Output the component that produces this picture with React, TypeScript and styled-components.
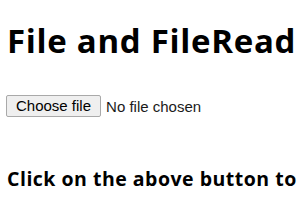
import React from 'react';
import styled, { createGlobalStyle } from 'styled-components';

const GlobalStyle = createGlobalStyle`
  html, body {
    margin: 0;
    background: #ffffff;
    overflow: hidden;
  }
  body {
    padding: 8px 7px;
    font-family: "Open Sans", "Noto Sans", sans-serif;
    color: #000000;
  }
`;

const Page = styled.div`
  display: flex;
  flex-direction: column;
`;

const Title = styled.h1`
  margin: 12px 0 0 0;
  font-size: 33px;
  font-weight: 700;
  letter-spacing: 0.7px;
  white-space: nowrap;
  line-height: 42px;
`;

const FileRow = styled.div`
  margin-top: 33px;
  display: flex;
  align-items: center;
  gap: 5px;
  font-family: "Liberation Sans", Arial, sans-serif;
  font-size: 15px;
  color: #1a1a1a;
`;

const ChooseButton = styled.label`
  display: inline-block;
  box-sizing: border-box;
  margin-left: -1px;
  padding: 0 9px;
  height: 22px;
  line-height: 20px;
  border: 1px solid #a9a9a9;
  border-radius: 2px;
  background: #efefef;
  color: #000;
  cursor: pointer;
`;

const Hint = styled.h3`
  margin: 49px 0 0 0;
  font-size: 19.5px;
  font-weight: 700;
  letter-spacing: 0.5px;
  line-height: 26px;
  white-space: nowrap;
`;

const App: React.FC = () => {
  return (
    <Page>
      <GlobalStyle />
      <Title>File and FileRead</Title>
      <FileRow>
        <ChooseButton>Choose file</ChooseButton>
        <span>No file chosen</span>
      </FileRow>
      <Hint>Click on the above button to</Hint>
    </Page>
  );
};

export default App;
